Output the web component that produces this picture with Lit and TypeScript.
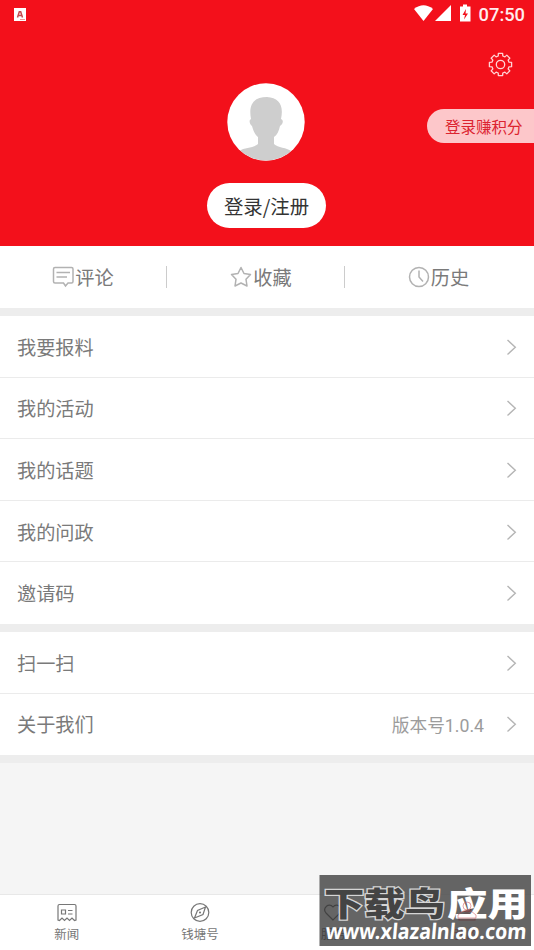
import { LitElement, html, css, svg } from "lit";
import { customElement, property } from "lit/decorators.js";

const comment = svg`<path d="M3 1.500H19.500Q21 1.500 21 3V15.500Q21 17 19.500 17H16L13.500 20L11.500 17H3Q1.500 17 1.500 15.500V3Q1.500 1.500 3 1.500ZM4.500 6.500H18M4.500 11H15"/>`;
const star = svg`<path stroke-linejoin="round" d="M11 1.500L14 7.500L20.500 8.500L16 13.300L17 20L11 17L5 20L6 13.300L1.500 8.500L8 7.500Z"/>`;
const clock = svg`<circle cx="11" cy="11" r="9.500"/><path d="M11 4.500V11L15 15.500"/>`;

@customElement("menu-row")
class MenuRow extends LitElement {
  @property() label = "";
  @property() note = "";
  static styles = css`
    :host { display: flex; align-items: center; height: 61.600px; box-sizing: border-box; padding: 1px 17px 0; background: #fff; border-bottom: 1px solid #ebebeb; color: #7a7a7a; font-size: 19.200px; }
    :host(:last-child) { border-bottom-color: transparent; }
    .label { flex: 1; }
    .note { color: #9c9c9c; font: 17.700px Roboto, "Noto Sans CJK SC", sans-serif; margin-right: 22px; }
    svg { width: 11px; height: 18px; fill: none; stroke: #b5b5b5; stroke-width: 1.400; }
  `;
  render() {
    return html`<span class="label">${this.label}</span><span class="note">${this.note}</span>
      <svg viewBox="0 0 11 18"><path d="M1.500 2L9.300 9.200L1.500 16.500"/></svg>`;
  }
}

@customElement("app-root")
class AppRoot extends LitElement {
  static styles = css`
    :host { display: flex; flex-direction: column; position: relative; width: 534px; height: 950px; overflow: hidden; background: #f5f5f5; font-family: "Noto Sans CJK SC", sans-serif; }
    * { box-sizing: border-box; }
    svg { display: block; flex: none; }
    header { height: 246px; background: #f3101b; display: flex; flex-direction: column; align-items: center; position: relative; }
    .status { width: 100%; height: 28px; display: flex; align-items: center; padding: 0 9px 0 14px; color: #ffeced; font: 500 18.300px Roboto, sans-serif; }
    .app { width: 12px; height: 13px; margin-right: auto; }
    .signals { width: 60px; height: 20px; margin-right: 5px; }
    .gear { position: absolute; left: 488px; top: 52px; width: 25px; height: 25px; fill: none; stroke: #ffd3d5; stroke-width: 1.300; }
    .points { position: absolute; right: 0; top: 109px; width: 107px; height: 34px; border-radius: 17px 0 0 17px; background: #fdc7ca; color: #dc2430; font-size: 15.500px; line-height: 34px; padding-left: 18px; white-space: nowrap; }
    .avatar { width: 78px; height: 78px; margin-top: 55px; margin-right: 2px; }
    .login { margin-top: 22px; margin-right: 1px; width: 119px; height: 45px; border-radius: 23px; background: #fff; color: #333; font-size: 19.400px; line-height: 45px; text-align: center; }
    .tabs { height: 62px; background: #fff; display: flex; align-items: center; flex: none; }
    .tab { flex: 1; height: 22px; display: flex; align-items: center; justify-content: center; gap: 1px; color: #7a7a7a; font-size: 19.200px; padding-right: 2px; }
    .tab + .tab { border-left: 1px solid #ccc; }
    .tabs .tab:first-child { flex: 0 0 166px; padding-right: 0; }
    .tabs .tab:nth-child(2) { flex: 0 0 178px; padding-right: 0; padding-left: 11px; }
    .tab svg { width: 22px; height: 22px; fill: none; stroke: #b2b2b2; stroke-width: 1.500; }
    .group { border-top: 8px solid #ededed; flex: none; }
    .end { height: 8px; background: #ededed; }
    nav { margin-top: auto; height: 56px; display: flex; border-top: 1px solid #e8e8e8; background: #fff; }
    .item { width: 133.300px; display: flex; flex-direction: column; align-items: center; padding-top: 7px; font-size: 12.500px; line-height: 20px; color: #777; }
    .item svg { width: 20px; height: 21px; fill: none; stroke: #777; stroke-width: 1.200; margin-bottom: 1px; }
    .item:nth-child(3) { color: #222; }
    .item:nth-child(3) svg { stroke: #111; }
    .active { color: #f3101b; }
    .active svg { stroke: #f3101b; }
    .mark { position: absolute; left: 319px; top: 875px; width: 213px; height: 72px; }
    .cn { font: 900 33px "Noto Sans CJK SC", sans-serif; }
    .url { font: 700 21.500px "Noto Sans", sans-serif; }
  `;
  gear() {
    const pts: string[] = [];
    for (let i = 0; i < 8; i++) {
      for (const [o, r] of [[-15, 8.8], [-11, 11.300], [11, 11.300], [15, 8.8]]) {
        const a = ((i * 45 + o) * Math.PI) / 180;
        pts.push((12.5 + r * Math.sin(a)).toFixed(2) + "," + (12.5 - r * Math.cos(a)).toFixed(2));
      }
    }
    return svg`<polygon stroke-linejoin="round" points=${pts.join(" ")} /><circle cx="12.500" cy="12.500" r="4.200"/>`;
  }
  render() {
    return html`
      <header>
        <div class="status">
          <svg class="app" viewBox="0 0 12 13"><rect width="12" height="13" fill="#fff"/><path d="M3.500 9.500L5.300 3.700H6.700L8.500 9.500M4.500 7.500H7.500" fill="none" stroke="#c44b50" stroke-width="1.500"/><path d="M6 11.500H11" stroke="#e99"/></svg>
          <svg class="signals" viewBox="0 0 60 20" fill="#fff"><path d="M0 5Q9.500-2.500 19 5L9.500 17Z"/><path d="M37 1V17H21Z"/><path d="M49 .5H53V2.500H56.500V17.500H46V2.500H49Z"/><path d="M52 5L48.500 11H51L50 15.500L54 9.500H51.500Z" fill="#f3101b"/></svg>
          <span>07:50</span>
        </div>
        <svg class="gear" viewBox="0 0 25 25">${this.gear()}</svg>
        <div class="points">登录赚积分</div>
        <svg class="avatar" viewBox="0 0 78 78"><defs><clipPath id="disc"><circle cx="39" cy="39" r="38.500"/></clipPath></defs><circle cx="39" cy="39" r="38.700" fill="#fff"/><path clip-path="url(#disc)" fill="#cecece" d="M25 43C22 40 22 37 24 36C21 20 28 14 40 14C52 15 57 22 54 36C57 37 56 41 53 43C52 48 50 52 47 54V61C51 65 59 64 66 69V80H12V68C18 64 27 65 31 61V54C28 52 26 47 25 43Z"/></svg>
        <div class="login">登录/注册</div>
      </header>
      <section class="tabs">
        <div class="tab"><svg viewBox="0 0 22 22">${comment}</svg>评论</div>
        <div class="tab"><svg viewBox="0 0 22 22">${star}</svg>收藏</div>
        <div class="tab"><svg viewBox="0 0 22 22">${clock}</svg>历史</div>
      </section>
      <section class="group">${["我要报料", "我的活动", "我的话题", "我的问政", "邀请码"].map((t) => html`<menu-row label=${t}></menu-row>`)}</section>
      <section class="group"><menu-row label="扫一扫"></menu-row><menu-row label="关于我们" note="版本号1.0.4"></menu-row></section>
      <div class="end"></div>
      <nav>
        <div class="item"><svg viewBox="0 0 20 21"><path d="M1 18V4Q1 2.500 2.500 2.500H17.500Q19 2.500 19 4V18L17.500 18.500L15 16L12.500 18.500L10 16L7.500 18.500L5 16L2.500 18.500Z"/><path d="M4.500 8H8.500V12H4.500ZM11 8.500H15.500M11 12H15.500"/></svg>新闻</div>
        <div class="item"><svg viewBox="0 0 20 21"><circle cx="10" cy="10.500" r="8.800"/><path d="M15.500 5L13 12.500L4.500 16L7.500 8.500Z"/><circle cx="10" cy="10.500" r=".5"/></svg>钱塘号</div>
        <div class="item"><svg viewBox="0 0 20 21"><path d="M10 18L3 11C-1 6 6 0 10 5C14 0 21 6 17 11Z"/></svg>服务</div>
        <div class="item active"><svg viewBox="0 0 20 21"><circle cx="10" cy="6" r="4"/><path d="M2 18V15L7 12H13L18 15V18Z"/></svg>我的</div>
      </nav>
      <svg class="mark" viewBox="0 0 213 72">
        <rect x=".5" y="0" width="211.500" height="71" fill="#4a4a4a" fill-opacity=".85"/>
        <text class="cn" x="5" y="41" textLength="121" lengthAdjust="spacingAndGlyphs" fill="#444" stroke="#d5d5d5" stroke-width="2.400" paint-order="stroke">下载鸟</text>
        <text class="cn" x="128" y="41" textLength="81" lengthAdjust="spacingAndGlyphs" fill="#fff">应用</text>
        <g transform="translate(432 903) translate(-319 -875)" fill="none" stroke="#c94850" stroke-opacity=".5"><circle cx="35" cy="3" r="4"/><path d="M26 15V12L31 8H39L44 12V15Z"/></g>
        <text class="url" x="6" y="0" transform="translate(0 64) skewX(-5)" textLength="201" lengthAdjust="spacingAndGlyphs" fill="#fff">www.xlazalnlao.com</text>
      </svg>`;
  }
}
